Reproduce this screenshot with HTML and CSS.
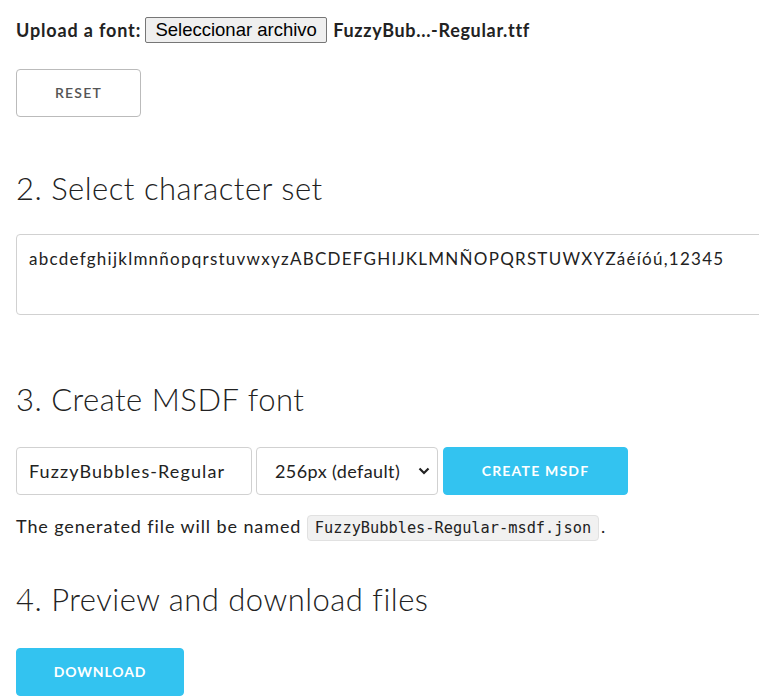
FILE: index.html
```html
<!DOCTYPE html>
<html lang="en">
<head>
<meta charset="utf-8">
<title>MSDF font generator</title>
<link rel="stylesheet" href="styles.css">
</head>
<body>
<main class="page">
  <div class="upload">
    <span class="upload-label">Upload a font:</span>
    <button class="file-btn" type="button">Seleccionar archivo</button>
    <span class="file-name">FuzzyBub...-Regular.ttf</span>
  </div>
  <button class="btn btn-reset" type="button">Reset</button>

  <h2 class="step step-2">2. Select character set</h2>
  <textarea class="charset">abcdefghijklmnñopqrstuvwxyzABCDEFGHIJKLMNÑOPQRSTUWXYZáéíóú,12345</textarea>

  <h2 class="step step-3">3. Create MSDF font</h2>
  <div class="create-row">
    <input class="field name-field" type="text" value="FuzzyBubbles-Regular">
    <div class="select">
      <span class="select-value">256px (default)</span>
      <svg class="select-arrow" width="12" height="8" viewBox="0 0 12 8"><path d="M1.5 1.5 L6 6 L10.5 1.5" fill="none" stroke="#222" stroke-width="2.2"/></svg>
    </div>
    <button class="btn btn-primary btn-create" type="button">Create MSDF</button>
  </div>
  <p class="note">The generated file will be named <code class="code">FuzzyBubbles-Regular-msdf.json</code>.</p>

  <h2 class="step step-4">4. Preview and download files</h2>
  <button class="btn btn-primary btn-download" type="button">Download</button>
</main>
</body>
</html>
```

FILE: styles.css
```css
html, body {
  margin: 0;
  padding: 0;
  overflow: hidden;
  background: #fff;
}

body {
  font-family: "Lato", "Open Sans", sans-serif;
  color: #222;
  font-size: 18px;
}

.page {
  padding: 17px 16px 0 16px;
}

.upload {
  display: flex;
  align-items: center;
  height: 26px;
  font-weight: 700;
  font-size: 18px;
  letter-spacing: 0.85px;
}

.upload-label {
  margin-right: 4px;
}

.file-btn {
  box-sizing: border-box;
  height: 26px;
  width: 182px;
  padding: 0 4px;
  border: 1px solid #767676;
  border-radius: 2px;
  background: #efefef;
  color: #000;
  font-family: "Liberation Sans", Arial, sans-serif;
  font-size: 18.5px;
  letter-spacing: 0;
}

.file-name {
  margin-left: 6px;
  letter-spacing: 0.68px;
}

.btn {
  display: block;
  box-sizing: border-box;
  height: 48px;
  padding-bottom: 3px;
  border-radius: 4px;
  font-family: "Lato", "Open Sans", sans-serif;
  font-size: 14px;
  font-weight: 700;
  letter-spacing: 1.2px;
  text-transform: uppercase;
  cursor: pointer;
}

.btn-reset {
  margin-top: 26px;
  width: 125px;
  border: 1px solid #bbb;
  background: #fff;
  color: #555;
  font-weight: 600;
}

.btn-primary {
  border: 1px solid #33c3f0;
  background: #33c3f0;
  color: #fff;
}

.step {
  margin: 0;
  font-size: 31px;
  font-weight: 300;
  line-height: 40px;
  letter-spacing: 0.5px;
}

.step-2 {
  margin-top: 51px;
}

.charset {
  display: block;
  box-sizing: border-box;
  margin-top: 26px;
  width: 800px;
  height: 81px;
  padding: 13px 12px 8px;
  border: 1px solid #d1d1d1;
  border-radius: 4px;
  font-family: "Lato", "Open Sans", sans-serif;
  font-size: 17px;
  letter-spacing: 1.25px;
  color: #222;
  resize: none;
}

.step-3 {
  margin-top: 64px;
}

.create-row {
  display: flex;
  align-items: center;
  gap: 4px;
  margin-top: 28px;
}

.field {
  box-sizing: border-box;
  height: 48px;
  width: 236px;
  padding: 6px 12px;
  border: 1px solid #d1d1d1;
  border-radius: 4px;
  font-family: "Lato", "Open Sans", sans-serif;
  font-size: 18px;
  letter-spacing: 1.1px;
  color: #222;
}

.select {
  box-sizing: border-box;
  display: flex;
  align-items: center;
  justify-content: space-between;
  height: 48px;
  width: 182px;
  padding: 0 7px 0 18px;
  border: 1px solid #d1d1d1;
  border-radius: 4px;
  font-size: 18px;
  letter-spacing: 0.4px;
}

.btn-create {
  width: 185px;
  margin-left: 1px;
}

.note {
  margin: 18px 0 0 0;
  font-size: 18px;
  line-height: 26px;
  letter-spacing: 0.9px;
}

.code {
  display: inline-block;
  box-sizing: border-box;
  height: 26px;
  line-height: 24px;
  padding: 0 7px;
  margin: 0 2px 0 0;
  font-family: "DejaVu Sans Mono", monospace;
  font-size: 15.3px;
  letter-spacing: 0;
  background: #f1f1f1;
  border: 1px solid #e1e1e1;
  border-radius: 4px;
  vertical-align: middle;
}

.step-4 {
  margin-top: 38px;
}

.btn-download {
  margin-top: 29px;
  width: 168px;
  letter-spacing: 0.9px;
}
```
